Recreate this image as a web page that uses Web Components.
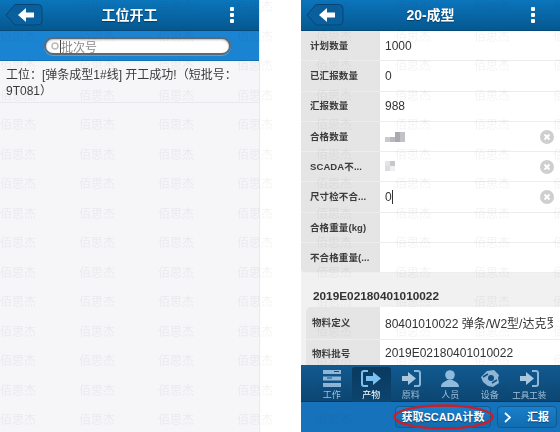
<!DOCTYPE html>
<html lang="zh"><head><meta charset="utf-8"><title>工位开工</title>
<style>
html,body{margin:0;padding:0;background:#fff;height:432px;overflow:hidden}
body{font-family:"Liberation Sans","Noto Sans CJK SC",sans-serif;font-size:12px;color:#333}
</style></head>
<body>
<app-screens>
  <phone-panel slot="left" tone="light">
    <nav-header title="工位开工"></nav-header>
    <search-bar placeholder="批次号"></search-bar>
    <message-row>工位：[弹条成型1#线] 开工成功!（短批号：9T081）</message-row>
  </phone-panel>
  <phone-panel slot="right" tone="grey">
    <nav-header title="20-成型"></nav-header>
    <form-card first>
      <form-row label="计划数量" value="1000"></form-row>
      <form-row label="已汇报数量" value="0"></form-row>
      <form-row label="汇报数量" value="988"></form-row>
      <form-row label="合格数量" masked="wide" clear></form-row>
      <form-row label="SCADA不..." masked="narrow" clear></form-row>
      <form-row label="尺寸检不合..." value="0" caret clear></form-row>
      <form-row label="合格重量(kg)"></form-row>
      <form-row label="不合格重量(..."></form-row>
    </form-card>
    <section-title>2019E02180401010022</section-title>
    <form-card inset>
      <form-row tall label="物料定义" value="80401010022 弹条/W2型/达克罗"></form-row>
      <form-row label="物料批号" value="2019E02180401010022"></form-row>
    </form-card>
    <bottom-bar></bottom-bar>
  </phone-panel>
  <water-mark slot="overlay" text="佰思杰"></water-mark>
</app-screens>
<script>
const def=(name,html,init)=>customElements.define(name,class extends HTMLElement{
  connectedCallback(){
    if(this.shadowRoot)return;
    const r=this.attachShadow({mode:'open'});
    r.innerHTML=typeof html==='function'?html(this):html;
    if(init)init(this,r);
  }
});
def('app-screens',`<style>
:host{display:block;position:relative;width:560px;height:432px;overflow:hidden}
.row{display:flex;justify-content:space-between;height:432px}
</style><div class="row"><slot name="left"></slot><slot name="right"></slot></div><slot name="overlay"></slot>`);

def('phone-panel',e=>`<style>
:host{display:flex;flex-direction:column;width:259px;height:432px;overflow:hidden;position:relative;
background:${e.getAttribute('tone')==='light'?'#f6f5f8':'#f1f1f1'};filter:blur(.35px);box-shadow:1px 0 1px #eceaf0}
</style><slot></slot>`);

def('nav-header',e=>`<style>
:host{display:flex;align-items:center;justify-content:space-between;flex:none;box-sizing:border-box;height:31px;padding:0 25px 1px 5px;
background:linear-gradient(#0b75bc,#05588f);border-bottom:1px solid #04497a;position:relative}
h1{position:absolute;left:0;right:0;top:0;height:30px;margin:0;font:bold 14px/31px "Liberation Sans","Noto Sans CJK SC",sans-serif;color:#fff;text-align:center;text-shadow:0 1px 1px #043e68}
svg{display:block;flex:none}
.dots{display:flex;flex-direction:column;gap:2px}
.dots i{display:block;width:4px;height:4px;background:#fff;border-radius:1px}
</style>
<svg width="38" height="22" viewBox="0 0 38 22"><path d="M10 .5H33a4 4 0 0 1 4 4V17a4 4 0 0 1-4 4H10L1 11Z" fill="#0a5f9d" stroke="#064676"/>
<path d="M13 11L21 4V8.500H29V13.500H21V18Z" fill="#fff"/></svg>
<h1>${e.getAttribute('title')}</h1>
<span class="dots"><i></i><i></i><i></i></span>`);

def('search-bar',e=>`<style>
:host{display:block;flex:none;box-sizing:border-box;height:30px;padding:6px 0 0 44px;background:#1a83d2;border-bottom:1px solid #1272ba}
.box{display:flex;align-items:center;box-sizing:border-box;width:187px;height:18px;padding:0 5px;gap:1px;background:#fff;border:2px solid #5c6a75;border-radius:9px;box-shadow:inset 0 1px 2px #bbb,0 1px 0 #4fa2e0;color:#8a8a8a;font-size:12px}
svg{flex:none}
.c{width:1px;height:13px;background:#444;margin-right:-1px}
</style><div class="box"><svg width="8" height="8" viewBox="0 0 8 8"><circle cx="4" cy="4" r="3" fill="none" stroke="#bbb" stroke-width="1.5"/></svg><span class="c"></span><span>${e.getAttribute('placeholder')}</span></div>`);

def('message-row',`<style>
:host{display:block;box-sizing:border-box;height:42px;padding:6px 6px 0;line-height:16px;font-size:12px;color:#3a3a3a;border-bottom:1px solid #e9e8ec}
</style><slot></slot>`);

def('form-card',e=>`<style>
:host{display:flex;flex-direction:column;flex:none;
${e.hasAttribute('inset')?'margin-left:5px;border-radius:5px 0 0 0;overflow:hidden;':'border-radius:0 0 0 5px;overflow:hidden;'}}
</style><slot></slot>`);

def('form-row',e=>{
  const m=e.getAttribute('masked');
  const inset=e.parentElement.hasAttribute('inset');
  const mask=m?`<span class="m ${m}"><i></i><i></i><i></i><i></i></span>`:'';
  const h=e.hasAttribute('tall')?33:(inset?28:30.3);
  return `<style>
:host{display:flex;flex:none;height:${h}px;box-sizing:border-box;border-bottom:1px solid #ededed}
.l{flex:none;width:${inset?74:79}px;box-sizing:border-box;padding:0 0 ${inset?1:0}px ${inset?6:9}px;background:#e5e5e5;display:flex;align-items:center;font:bold 9.5px/1 "Liberation Sans","Noto Sans CJK SC",sans-serif;color:#3c3c3c;white-space:nowrap;overflow:hidden;letter-spacing:.1px}
.v{flex:1;min-width:0;background:#fff;display:flex;align-items:center;padding:0 7px ${inset?1:0}px 5px;font-size:12px;color:#333;white-space:nowrap;position:relative}
.t{overflow:hidden;min-width:0}
.c{flex:none;width:1px;height:14px;background:#333}
.x{position:absolute;right:6px;top:50%;margin-top:-7px}
.m{display:grid;grid-template-columns:repeat(4,5px);grid-auto-rows:5px}
.m.narrow{grid-template-columns:repeat(2,5px);margin-top:-2px}
.m i{background:#d3d3d8}
.m.wide i:nth-child(1){background:#c9c9ce;grid-row:2}
.m.wide i:nth-child(2){background:#b8b8be;grid-row:2}
.m.wide i:nth-child(3){background:#a9a9b0;grid-row:1/3;height:10px}
.m.wide i:nth-child(4){background:#c2c2c8;grid-row:1/3;height:10px}
.m.narrow i:nth-child(1){background:#e4e4e8}
.m.narrow i:nth-child(2){background:#c6c6cb}
.m.narrow i:nth-child(3){background:#dcdce0}
.m.narrow i:nth-child(4){background:#f0f0f2}
</style><div class="l">${e.getAttribute('label')}</div><div class="v"><span class="t">${e.getAttribute('value')||''}</span>${mask}${e.hasAttribute('caret')?'<span class="c"></span>':''}${e.hasAttribute('clear')?`<svg class="x" width="14" height="14" viewBox="0 0 14 14"><circle cx="7" cy="7" r="7" fill="#cfcfcf"/><path d="M4.5 4.5L9.5 9.5M9.5 4.5L4.5 9.5" stroke="#fff" stroke-width="2"/></svg>`:''}</div>`;
});

def('section-title',`<style>
:host{display:block;flex:none;box-sizing:border-box;height:34px;padding:15px 0 0 12px;font:bold 11.8px/16px "Liberation Sans",sans-serif;color:#333}
</style><slot></slot>`);

const ICON={
 work:`<path d="M1 1H19V5H1ZM1 7.5H19V11.5H1ZM1 14H19V18H1Z" fill="#8fb6d6"/><path d="M12 2.5H17M5 9H10" stroke="#0d4f80"/>`,
 out:`<path d="M7 2H3A2 2 0 0 0 1 4V15A2 2 0 0 0 3 17H7" fill="none" stroke="#7cc0f0" stroke-width="2"/><path d="M5 7H12V3L20 9.5L12 16V12H5Z" fill="#7cc0f0"/>`,
 in:`<path d="M13 2H17A2 2 0 0 1 19 4V15A2 2 0 0 1 17 17H13" fill="none" stroke="#8fb6d6" stroke-width="2"/><path d="M1 7H7V3L15 9.5L7 16V12H1Z" fill="#a9c8e0"/>`,
 user:`<circle cx="10" cy="6" r="4.8" fill="#8fbbdd"/><path d="M1 18C1 13 6 12.5 7.5 11H12.500C14 12.500 19 13 19 18Z" fill="#8fbbdd"/>`,
 gear:`<path d="M1 8L7 2L14 1L19 6L18 9L19 14L13 18L8 17L3 13Z" fill="#8fb6d6"/><circle cx="11" cy="9" r="3" fill="#0d4f80"/><path d="M3 8L8 5M12 14L17 11" stroke="#0d4f80" stroke-width="1.5"/>`
};
def('tab-item',e=>`<style>
:host{display:flex;flex-direction:column;align-items:center;box-sizing:border-box;flex:1 1 0;min-width:0;padding-top:2px;height:35px;border-radius:3px 3px 0 0;
${e.hasAttribute('active')?'background:linear-gradient(#0a3a60,#0c456f);':''}
color:${e.hasAttribute('active')?'#fff':'#a3c0d8'};font:9px/10px "Liberation Sans","Noto Sans CJK SC",sans-serif;white-space:nowrap}
svg{display:block;margin-bottom:2px}
.s{font-size:8.5px}
</style><svg width="20" height="19" viewBox="0 0 20 19">${ICON[e.getAttribute('icon')]}</svg><span class="${e.getAttribute('label').length>2?'s':''}">${e.getAttribute('label')}</span>`);

def('bar-button',e=>`<style>
:host{display:flex;align-items:center;box-sizing:border-box;height:22px;border-radius:4px;background:linear-gradient(#1a7fca,#116cb0);border:1px solid #0e5c96;color:#fff;font:bold 11px/20px "Liberation Sans","Noto Sans CJK SC",sans-serif;text-shadow:0 1px 1px #0a3f6a;white-space:nowrap;justify-content:${e.hasAttribute('chevron')?'flex-start':'center'}}
span{flex:none}
svg{flex:none;margin:0 16px 0 6px}
</style>${e.hasAttribute('chevron')?'<svg width="7" height="11" viewBox="0 0 7 11"><path d="M1 1L6 5.5L1 10" fill="none" stroke="#fff" stroke-width="1.8"/></svg>':''}<span><slot></slot></span>`);

def('bottom-bar',`<style>
:host{position:absolute;left:0;right:0;bottom:0;display:flex;flex-direction:column;height:67px}
.tabs{display:flex;box-sizing:border-box;height:37px;padding:2px 11px 0 11px;background:linear-gradient(#115a91,#0c4672);border-bottom:1px solid #08395e}
.act{position:relative;display:flex;justify-content:flex-end;align-items:center;gap:6px;height:30px;padding:0 3px 0 0;background:#1672bb}
bar-button:first-child{width:96px}
bar-button:nth-child(2){width:60px}
.oval{position:absolute;left:92px;top:2px}
</style>
<div class="tabs">
<tab-item icon="work" label="工作"></tab-item>
<tab-item icon="out" label="产物" active></tab-item>
<tab-item icon="in" label="原料"></tab-item>
<tab-item icon="user" label="人员"></tab-item>
<tab-item icon="gear" label="设备"></tab-item>
<tab-item icon="in" label="工具工装"></tab-item>
</div>
<div class="act"><bar-button>获取SCADA计数</bar-button><bar-button chevron>汇报</bar-button>
<svg class="oval" width="101" height="26" viewBox="0 0 101 26"><ellipse cx="50.500" cy="13" rx="49" ry="11.500" fill="none" stroke="#c9202c" stroke-width="2.500"/></svg></div>`);

def('water-mark',e=>{
  const t=e.getAttribute('text');
  return `<style>
:host{position:absolute;inset:0;overflow:hidden;pointer-events:none;display:block;filter:blur(.4px)}
.g{display:grid;grid-template-columns:repeat(8,79px);grid-auto-rows:29.5px;margin-top:-9px;color:rgba(60,50,70,.06);font:12px/29.5px "Noto Sans CJK SC",sans-serif}
</style><div class="g">${Array(8*16).fill(`<span>${t}</span>`).join('')}</div>`;
});
</script>
</body></html>
